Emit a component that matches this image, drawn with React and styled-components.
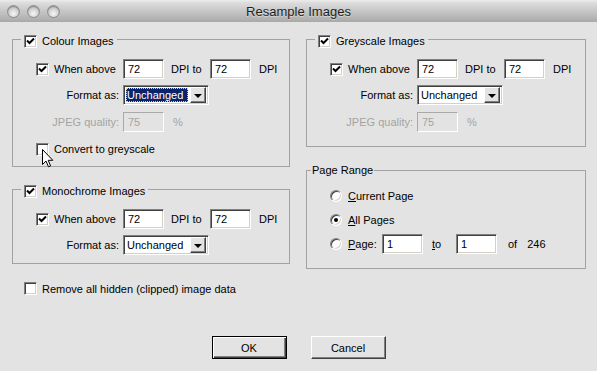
import React from "react";
import styled, { createGlobalStyle, css } from "styled-components";

const FACE = "#e3e3e3";

const GlobalStyle = createGlobalStyle`
  html, body {
    margin: 0;
    padding: 0;
    background: ${FACE};
    overflow: hidden;
  }
  body {
    font-family: "Liberation Sans", Arial, sans-serif;
    font-size: 11px;
    color: #000;
  }
`;

const sunken = css`
  box-sizing: border-box;
  border: 1px solid;
  border-color: #808080 #ffffff #ffffff #808080;
  box-shadow: inset 1px 1px 0 #404040, inset -1px -1px 0 #d4d0c8;
`;

const raised = css`
  box-sizing: border-box;
  border: 1px solid;
  border-color: #ffffff #404040 #404040 #ffffff;
  box-shadow: inset -1px -1px 0 #808080;
`;

const Window = styled.div`
  position: relative;
  width: 597px;
  height: 371px;
  display: flex;
  flex-direction: column;
  background: ${FACE};
`;

const TitleBar = styled.div`
  height: 22px;
  flex-shrink: 0;
  display: grid;
  grid-template-columns: 1fr auto 1fr;
  align-items: center;
  background: linear-gradient(#ececec 0, #dcdcdc 3px, #a9a9a9 100%);
`;

const Lights = styled.div`
  display: flex;
  gap: 7px;
  padding-left: 7px;
`;

const Light = styled.span`
  width: 13px;
  height: 13px;
  box-sizing: border-box;
  border-radius: 50%;
  border: 1px solid #8c8c8c;
  background: radial-gradient(circle at 50% 70%, #f6f6f6 0, #d6d6d6 45%, #a9a9a9 100%);
  box-shadow: inset 0 1px 1px rgba(0, 0, 0, 0.25);
`;

const Title = styled.div`
  font-size: 13px;
  color: #1e1e1e;
  text-shadow: 0 1px 0 rgba(255, 255, 255, 0.45);
`;

const Body = styled.div`
  flex: 1;
  display: flex;
  flex-direction: column;
  padding: 17px 12px 12px;
`;

const Columns = styled.div`
  display: grid;
  grid-template-columns: 278px 280px;
  column-gap: 16px;
  align-items: start;
`;

const Column = styled.div`
  display: flex;
  flex-direction: column;
`;

const Group = styled.div`
  position: relative;
  box-sizing: border-box;
  height: ${(p) => p.$h}px;
  margin-top: ${(p) => p.$mt || 0}px;
  padding: ${(p) => p.$pt || 19}px 0 0 23px;
  border: 1px solid #a2a2a2;
  display: flex;
  flex-direction: column;
`;

const Legend = styled.div`
  position: absolute;
  top: ${(p) => p.$top}px;
  left: ${(p) => p.$left}px;
  height: 14px;
  display: flex;
  align-items: center;
  gap: 5px;
  padding: 0 ${(p) => (p.$pad === undefined ? 3 : p.$pad)}px;
  background: ${FACE};
  white-space: nowrap;
`;

const Row = styled.div`
  display: flex;
  align-items: center;
  height: ${(p) => p.$h || 20}px;
  margin-top: ${(p) => p.$mt || 0}px;
  padding-left: ${(p) => p.$pl || 0}px;
  white-space: nowrap;
`;

const Lead = styled.div`
  box-sizing: border-box;
  width: ${(p) => p.$w || 87}px;
  display: flex;
  align-items: center;
  justify-content: ${(p) => (p.$right ? "flex-end" : "flex-start")};
  gap: ${(p) => p.$gap || 5}px;
  padding-right: ${(p) => (p.$right ? 4 : 0)}px;
  color: ${(p) => (p.$disabled ? "#a3a3a3" : "#000")};
`;

const TextBox = styled.div`
  ${sunken};
  width: 41px;
  height: 20px;
  padding-left: 4px;
  display: flex;
  align-items: center;
  background: ${(p) => (p.$disabled ? FACE : "#fff")};
  color: ${(p) => (p.$disabled ? "#a3a3a3" : "#000")};
  ${(p) =>
    p.$disabled &&
    css`
      box-shadow: none;
      border-color: #a9a9a9 #ffffff #ffffff #a9a9a9;
    `}
`;

const Unit = styled.span`
  box-sizing: border-box;
  padding-left: ${(p) => p.$l}px;
  width: ${(p) => (p.$w ? `${p.$w}px` : "auto")};
  color: ${(p) => (p.$disabled ? "#a3a3a3" : "#000")};
`;

const Box = styled.span`
  ${sunken};
  width: 13px;
  height: 13px;
  flex-shrink: 0;
  background: #fff;
  display: flex;
  align-items: center;
  justify-content: center;
`;

const RadioRing = styled.span`
  box-sizing: border-box;
  width: 12px;
  height: 12px;
  flex-shrink: 0;
  border-radius: 50%;
  border: 1px solid;
  border-color: #808080 #ffffff #ffffff #808080;
  box-shadow: inset 1px 1px 0 #404040, inset -1px -1px 0 #d4d0c8;
  background: #fff;
  display: flex;
  align-items: center;
  justify-content: center;

  &::after {
    content: "";
    width: 4px;
    height: 4px;
    border-radius: 50%;
    background: ${(p) => (p.$on ? "#000" : "transparent")};
  }
`;

const SelectBox = styled.div`
  ${sunken};
  width: 86px;
  height: 20px;
  background: #fff;
  display: flex;
  align-items: center;
  padding: 2px;
`;

const SelectValue = styled.span`
  flex: 1;
  height: 14px;
  margin-right: 2px;
  padding-left: 1px;
  display: flex;
  align-items: center;
  ${(p) =>
    p.$focus &&
    css`
      background: #0a246a;
      color: #fff;
      outline: 1px dotted #e8d070;
      outline-offset: -1px;
    `}
`;

const DropButton = styled.span`
  ${raised};
  width: 16px;
  height: 16px;
  background: ${FACE};
  display: flex;
  align-items: center;
  justify-content: center;

  &::after {
    content: "";
    border-left: 4px solid transparent;
    border-right: 4px solid transparent;
    border-top: 4px solid #000;
    margin-top: 1px;
  }
`;

const U = styled.span`
  text-decoration: underline;
  text-underline-offset: 1px;
`;

const Footer = styled.div`
  margin-top: auto;
  display: flex;
  justify-content: center;
  gap: 24px;
`;

const Button = styled.button`
  ${raised};
  width: 75px;
  height: 23px;
  padding: 0;
  background: ${FACE};
  font: inherit;
  color: #000;
  ${(p) =>
    p.$default &&
    css`
      border: 1px solid #000;
      box-shadow: inset 1px 1px 0 #fff, inset -1px -1px 0 #404040, inset -2px -2px 0 #808080;
    `}
`;

const Cursor = styled.svg`
  position: absolute;
  left: 42px;
  top: 149px;
`;

const Checkbox = ({ checked }) => (
  <Box>
    {checked && (
      <svg width="9" height="9" viewBox="0 0 9 9">
        <path d="M1 3.5 L3.5 6 L8 1.5" fill="none" stroke="#000" strokeWidth="2" />
      </svg>
    )}
  </Box>
);

const Select = ({ value, focus }) => (
  <SelectBox>
    <SelectValue $focus={focus}>{value}</SelectValue>
    <DropButton />
  </SelectBox>
);

const DpiRow = () => (
  <Row>
    <Lead>
      <Checkbox checked />
      When above
    </Lead>
    <TextBox>72</TextBox>
    <Unit $l={7} $w={46}>DPI to</Unit>
    <TextBox>72</TextBox>
    <Unit $l={8}>DPI</Unit>
  </Row>
);

const FormatRow = ({ focus }) => (
  <Row $mt={6}>
    <Lead $right>Format as:</Lead>
    <Select value="Unchanged" focus={focus} />
  </Row>
);

const JpegRow = () => (
  <Row $mt={7}>
    <Lead $right $disabled>JPEG quality:</Lead>
    <TextBox $disabled>75</TextBox>
    <Unit $l={9} $disabled>%</Unit>
  </Row>
);

const RadioRow = ({ on, children, mt }) => (
  <Row $mt={mt}>
    <Lead $w={52} $gap={6}>
      <RadioRing $on={on} />
      {children}
    </Lead>
  </Row>
);

export default function App() {
  return (
    <Window>
      <GlobalStyle />
      <TitleBar>
        <Lights>
          <Light />
          <Light />
          <Light />
        </Lights>
        <Title>Resample Images</Title>
        <div />
      </TitleBar>

      <Body>
        <Columns>
          <Column>
            <Group $h={128}>
              <Legend $top={-6} $left={8}>
                <Checkbox checked />
                Colour Images
              </Legend>
              <DpiRow />
              <FormatRow focus />
              <JpegRow />
              <Row $mt={10} $h={14}>
                <Lead>
                  <Checkbox />
                  Convert to greyscale
                </Lead>
              </Row>
            </Group>

            <Group $h={75} $mt={22}>
              <Legend $top={-6} $left={8}>
                <Checkbox checked />
                Monochrome Images
              </Legend>
              <DpiRow />
              <FormatRow />
            </Group>

            <Row $mt={18} $h={13} $pl={12}>
              <Lead $w={260}>
                <Checkbox />
                Remove all hidden (clipped) image data
              </Lead>
            </Row>
          </Column>

          <Column>
            <Group $h={108}>
              <Legend $top={-6} $left={8}>
                <Checkbox checked />
                Greyscale Images
              </Legend>
              <DpiRow />
              <FormatRow />
              <JpegRow />
            </Group>

            <Group $h={99} $mt={23} $pt={15}>
              <Legend $top={-8} $left={4} $pad={1}>
                Page Range
              </Legend>
              <RadioRow>
                <span>
                  <U>C</U>urrent Page
                </span>
              </RadioRow>
              <RadioRow on mt={4}>
                <span>
                  <U>A</U>ll Pages
                </span>
              </RadioRow>
              <Row $mt={4}>
                <Lead $w={52} $gap={6}>
                  <RadioRing />
                  <span>
                    <U>P</U>age:
                  </span>
                </Lead>
                <TextBox>1</TextBox>
                <Unit $l={9} $w={33}>
                  <U>t</U>o
                </Unit>
                <TextBox>1</TextBox>
                <Unit $l={11}>of</Unit>
                <Unit $l={10}>246</Unit>
              </Row>
            </Group>
          </Column>
        </Columns>

        <Footer>
          <Button $default>OK</Button>
          <Button>Cancel</Button>
        </Footer>
      </Body>

      <Cursor width="12" height="19" viewBox="0 0 12 19">
        <path
          d="M0.5 0.5 L0.5 15.5 L4 12 L6.5 17.8 L8.6 16.9 L6.2 11.3 L10.8 11.3 Z"
          fill="#fff"
          stroke="#000"
          strokeWidth="1"
          strokeLinejoin="miter"
        />
      </Cursor>
    </Window>
  );
}
